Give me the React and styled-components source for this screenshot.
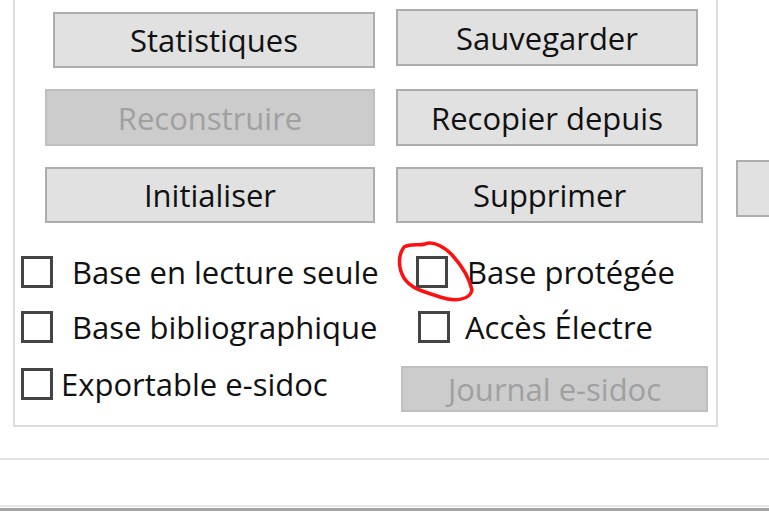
import React from 'react';
import styled, { createGlobalStyle } from 'styled-components';

const GlobalStyle = createGlobalStyle`
  html, body {
    margin: 0;
    padding: 0;
    background: #ffffff;
    overflow: hidden;
  }
  body {
    font-family: "Open Sans", "Noto Sans", "Liberation Sans", sans-serif;
    color: #111;
  }
`;

const Screen = styled.div`
  position: relative;
  width: 769px;
  height: 515px;
  overflow: hidden;
  display: flex;
  flex-direction: column;
`;

const Top = styled.div`
  display: flex;
  align-items: flex-start;
`;

const GroupBox = styled.div`
  flex-shrink: 0;
  margin-left: 13px;
  width: 701px;
  border: 2px solid #dcdcdc;
  border-top: none;
  padding-bottom: 13px;
`;

const ButtonGrid = styled.div`
  display: grid;
  grid-template-columns: 330px 307px;
  column-gap: 21px;
  row-gap: 21px;
  margin-top: 12px;
  margin-left: 30px;
`;

const Button = styled.div`
  box-sizing: border-box;
  width: ${p => p.$w || 302}px;
  height: ${p => p.$h || 57}px;
  margin-top: ${p => p.$mt || 0}px;
  margin-left: ${p => p.$ml || 0}px;
  justify-self: ${p => p.$end ? 'end' : 'start'};
  display: flex;
  align-items: center;
  justify-content: center;
  background: ${p => p.disabled ? '#cccccc' : '#e1e1e1'};
  border: 2px solid ${p => p.disabled ? '#bfbfbf' : '#adadad'};
  color: ${p => p.disabled ? '#a0a0a0' : '#111'};
  font-size: 31px;
  white-space: nowrap;
`;

const SideButton = styled(Button)`
  margin-left: 18px;
  margin-top: 160px;
  width: 60px;
  flex-shrink: 0;
`;

const CheckGrid = styled.div`
  display: grid;
  grid-template-columns: 395px auto;
  margin-left: 6px;
  margin-top: 33px;
  row-gap: 23px;
  align-items: start;
`;

const CheckItem = styled.label`
  display: flex;
  align-items: center;
  height: 32px;
  margin-top: ${p => p.$mt || 0}px;
  margin-left: ${p => p.$ml || 0}px;
  gap: ${p => p.$gap ?? 19}px;
  font-size: 31px;
  white-space: nowrap;
`;

const Box = styled.span`
  box-sizing: border-box;
  width: 32px;
  height: 32px;
  border: 3px solid #444;
  background: #fff;
  flex-shrink: 0;
`;

const Divider = styled.div`
  margin-top: 31px;
  height: 2px;
  background: #e3e3e3;
`;

const Bottom = styled.div`
  margin-top: 45px;
  border-top: 2px solid #e6e6e6;
  height: 3px;
  padding-top: 1px;
  &::after {
    content: '';
    display: block;
    height: 3px;
    background: #a3a3a3;
  }
`;

const Annotation = styled.svg`
  position: absolute;
  left: 0;
  top: 0;
  pointer-events: none;
`;

function Check({ label, ...rest }) {
  return (
    <CheckItem {...rest}>
      <Box />
      <span>{label}</span>
    </CheckItem>
  );
}

export default function App() {
  return (
    <Screen>
      <GlobalStyle />
      <Top>
        <GroupBox>
          <ButtonGrid>
            <Button $w={322} $h={56} $end>Statistiques</Button>
            <Button $mt={-3}>Sauvegarder</Button>
            <Button $w={330} disabled>Reconstruire</Button>
            <Button>Recopier depuis</Button>
            <Button $w={330} $h={56}>Initialiser</Button>
            <Button $w={307} $h={56}>Supprimer</Button>
          </ButtonGrid>
          <CheckGrid>
            <Check label="Base en lecture seule" />
            <Check label="Base protégée" />
            <Check label="Base bibliographique" />
            <Check label="Accès Électre" $ml={2} $gap={15} />
            <Check label="Exportable e-sidoc" $gap={8} $mt={2} />
            <Button $w={307} $h={46} $ml={-15} disabled>Journal e-sidoc</Button>
          </CheckGrid>
        </GroupBox>
        <SideButton />
      </Top>
      <Divider />
      <Bottom />
      <Annotation width="769" height="515" viewBox="0 0 769 515">
        <path
          d="M404 247 C412 243 419 246 425 244 C433 240 446 248 453 256 C462 266 469 277 472 290 C470 300 455 302 440 297 C426 292 412 290 404 278 C398 268 398 255 404 247 Z"
          fill="none"
          stroke="#ff1010"
          strokeWidth="3.5"
          strokeLinejoin="round"
        />
      </Annotation>
    </Screen>
  );
}
